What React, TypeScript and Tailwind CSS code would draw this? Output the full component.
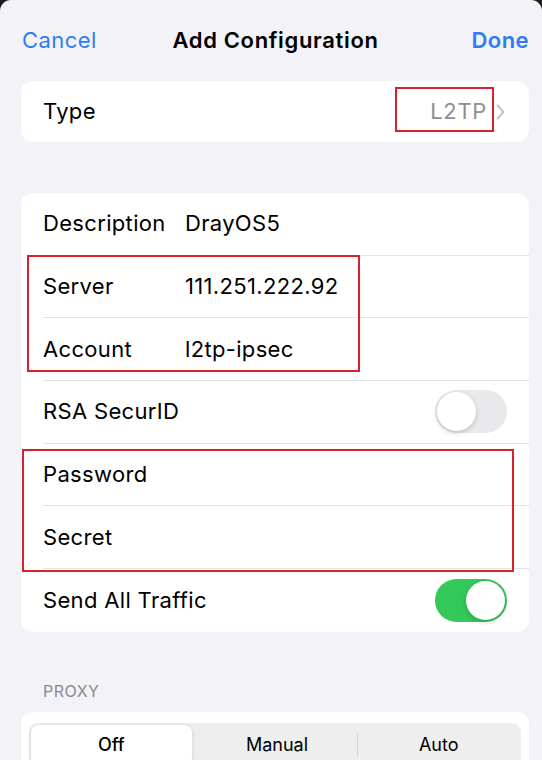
import React from "react";

function Toggle({ on }: { on: boolean }) {
  return (
    <div
      className={
        "relative h-[43px] w-[72px] shrink-0 rounded-full " +
        (on ? "bg-[#34c759]" : "bg-[#e9e9eb]")
      }
    >
      <div
        className={
          "absolute top-[2px] h-[39px] w-[39px] rounded-full bg-white shadow-[0_2px_5px_rgba(0,0,0,0.18)] " +
          (on ? "right-[2px]" : "left-[2px]")
        }
      />
    </div>
  );
}

function Row({
  label,
  value,
  right,
  last,
}: {
  label: string;
  value?: string;
  right?: React.ReactNode;
  last?: boolean;
}) {
  return (
    <div className="flex h-[62.7px] pl-[22px]">
      <div
        className={
          "flex flex-1 items-center pr-[22px] " +
          (last ? "" : "border-b border-[#e3e3e8]")
        }
      >
        <div className="min-w-[142px] shrink-0 whitespace-nowrap text-[22px] tracking-[0.015em] text-black">
          {label}
        </div>
        {value && (
          <div className="whitespace-nowrap text-[22px] tracking-[0.015em] text-black">{value}</div>
        )}
        <div className="flex-1" />
        {right}
      </div>
    </div>
  );
}

export default function App() {
  return (
    <div
      className="relative h-[760px] w-[542px] overflow-hidden bg-[#1c1c1e]"
      style={{ fontFamily: "Inter, 'Liberation Sans', sans-serif" }}
    >
      <div className="h-full w-full rounded-t-[11px] bg-[#f2f2f7]">
        {/* Nav */}
        <div className="grid h-[81px] grid-cols-[1fr_auto_1fr] items-center pl-[22px] pr-[13px]">
          <span className="justify-self-start text-[22px] tracking-[0.02em] text-[#2f7cf6]">Cancel</span>
          <span className="text-[22px] font-semibold tracking-[0.03em] text-black">
            Add Configuration
          </span>
          <span className="justify-self-end text-[22px] font-semibold tracking-[0.02em] text-[#2f7cf6]">
            Done
          </span>
        </div>

        {/* Type card */}
        <div className="ml-[21px] mr-[13px] flex h-[61px] items-center rounded-[12px] bg-white pl-[22px] pr-[24px]">
          <span className="text-[22px] tracking-[0.015em] text-black">Type</span>
          <div className="flex-1" />
          <span className="mr-[9px] text-[22px] tracking-[0.03em] text-[#8e8e93]">L2TP</span>
          <svg width="9" height="16" viewBox="0 0 9 16" fill="none">
            <path
              d="M1.5 1.5 L7.5 8 L1.5 14.5"
              stroke="#c4c4c7"
              strokeWidth="2"
              strokeLinecap="round"
              strokeLinejoin="round"
            />
          </svg>
        </div>

        {/* Main card */}
        <div className="ml-[21px] mr-[13px] mt-[51px] overflow-hidden rounded-[12px] bg-white">
          <Row label="Description" value="DrayOS5" />
          <Row label="Server" value="111.251.222.92" />
          <Row label="Account" value="l2tp-ipsec" />
          <Row label="RSA SecurID" right={<Toggle on={false} />} />
          <Row label="Password" />
          <Row label="Secret" />
          <Row label="Send All Traffic" right={<Toggle on={true} />} last />
        </div>

        {/* Proxy */}
        <div className="mt-[47px] pl-[43px] text-[16px] tracking-[0.03em] text-[#8a8a8e]">PROXY</div>
        <div className="ml-[21px] mr-[13px] mt-[9px] rounded-t-[12px] bg-white px-[8px] pt-[11px] pb-[10px]">
          <div className="flex h-[44px] items-stretch rounded-[9px] bg-[#eeeeef] p-[2px]">
            <div className="mr-[5px] flex flex-1 items-center justify-center rounded-[8px] bg-white text-[18px] font-medium text-black shadow-[0_1px_4px_rgba(0,0,0,0.15)]">
              Off
            </div>
            <div className="flex flex-1 items-center justify-center text-[18px] text-black">
              Manual
            </div>
            <div className="my-[8px] w-px bg-[#d5d5d8]" />
            <div className="flex flex-1 items-center justify-center text-[18px] text-black">
              Auto
            </div>
          </div>
        </div>
      </div>

      {/* Annotation boxes */}
      <div className="pointer-events-none absolute left-[395px] top-[87px] h-[45px] w-[99px] border-[2.5px] border-[#d7222d]" />
      <div className="pointer-events-none absolute left-[27px] top-[255px] h-[117px] w-[333px] border-[2.5px] border-[#d7222d]" />
      <div className="pointer-events-none absolute left-[22px] top-[449px] h-[123px] w-[492px] border-[2.5px] border-[#d7222d]" />
    </div>
  );
}
